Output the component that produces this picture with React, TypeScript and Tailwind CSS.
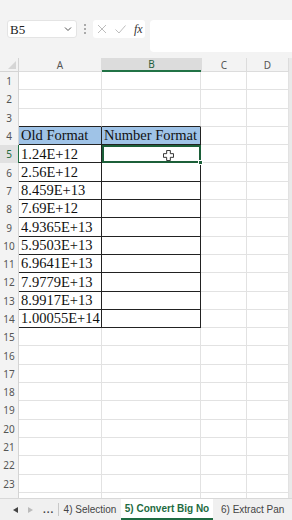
import React from "react";

const rows = Array.from({ length: 24 }, (_, i) => i + 1);

const data: Record<number, string> = {
  5: "1.24E+12",
  6: "2.56E+12",
  7: "8.459E+13",
  8: "7.69E+12",
  9: "4.9365E+13",
  10: "5.9503E+13",
  11: "6.9641E+13",
  12: "7.9779E+13",
  13: "8.9917E+13",
  14: "1.00055E+14",
};

const serif = { fontFamily: '"Liberation Serif", "Times New Roman", serif' };
const sans = { fontFamily: '"Noto Sans", "Open Sans", sans-serif' };
const tabFont = { fontFamily: '"Liberation Sans", Arial, sans-serif' };

function PlusCursor() {
  return (
    <svg width="11" height="11" viewBox="0 0 12 12" className="absolute left-[59px] top-[3px]">
      <path d="M4 0.5h4v3.5h3.5v4H8v3.5H4V8H0.5V4H4z" fill="#fff" stroke="#222" strokeWidth="1" />
    </svg>
  );
}

export default function App() {
  return (
    <div className="w-[292px] h-[520px] overflow-hidden bg-white flex flex-col" style={sans}>
      {/* formula bar */}
      <div className="h-[58px] shrink-0 bg-[#f3f3f3] flex items-start pt-[20px]">
        <div className="ml-[7px] w-[70px] h-[18px] bg-white rounded-[3px] border border-[#e4e4e4] flex items-center justify-between pl-[2px] pr-[4px]">
          <span className="text-[13px] text-[#222] leading-none" style={serif}>B5</span>
          <svg width="8" height="6" viewBox="0 0 8 6">
            <path d="M1 1.5l3 3 3-3" fill="none" stroke="#555" strokeWidth="1" />
          </svg>
        </div>
        <div className="w-[16px] h-[18px] flex flex-col items-center justify-center gap-[2px]">
          <span className="w-[2px] h-[2px] bg-[#aaa]" />
          <span className="w-[2px] h-[2px] bg-[#aaa]" />
          <span className="w-[2px] h-[2px] bg-[#aaa]" />
        </div>
        <div className="w-[52px] h-[18px] bg-white rounded-[3px] flex items-center pl-[4px] gap-[8px]">
          <svg width="10" height="10" viewBox="0 0 10 10">
            <path d="M1 1l8 8M9 1l-8 8" stroke="#bdbdbd" strokeWidth="1" />
          </svg>
          <svg width="11" height="9" viewBox="0 0 11 9">
            <path d="M0.5 4.5l3.5 3.5 6.5-7.5" fill="none" stroke="#bdbdbd" strokeWidth="1" />
          </svg>
          <span className="text-[12px] italic text-[#333] leading-none" style={serif}>fx</span>
        </div>
        <div className="ml-[5px] flex-1 h-[32px] bg-white rounded-l-[4px]" />
      </div>

      {/* column header */}
      <div className="h-[14px] shrink-0 flex bg-[#f3f3f3] text-[10px] text-[#555] leading-none">
        <div className="w-[19px] border-r border-b border-[#d4d4d4] relative">
          <svg width="8" height="8" viewBox="0 0 8 8" className="absolute right-[2px] bottom-[2px]">
            <path d="M8 0v8H0z" fill="#d6d6d6" />
          </svg>
        </div>
        <div className="w-[83px] border-r border-b border-[#dcdcdc] flex items-center justify-center">A</div>
        <div className="w-[99px] bg-[#dcdcdc] border-b-2 border-[#217346] flex items-center justify-center text-[#1f5e3a]">B</div>
        <div className="w-[46px] border-r border-b border-[#dcdcdc] border-l flex items-center justify-center">C</div>
        <div className="w-[42px] border-r border-b border-[#dcdcdc] flex items-center justify-center">D</div>
        <div className="flex-1 bg-[#e9e9e9]" />
      </div>

      {/* grid */}
      <div className="flex-1 overflow-hidden">
        {rows.map((r) => {
          const inTable = r >= 4 && r <= 14;
          const isHead = r === 4;
          const above = r === 3;
          return (
            <div key={r} className="h-[18.3px] flex">
              <div
                className={
                  r === 5
                    ? "w-[19px] bg-[#e1e1e1] border-r border-[#217346] flex items-center justify-center text-[10px] text-[#1f6b3e] leading-none"
                    : "w-[19px] bg-[#f3f3f3] border-r border-[#d4d4d4] flex items-center justify-center text-[10px] text-[#555] leading-none"
                }
              >
                {r}
              </div>
              <div
                className={
                  isHead
                    ? "w-[83px] bg-[#9fc3e7] border-r border-b border-[#222] flex items-center pl-[2px] text-[14.5px] text-[#111] leading-none"
                    : inTable
                    ? "w-[83px] border-r border-b border-[#222] flex items-center pl-[2px] text-[14.5px] text-[#111] leading-none"
                    : above
                    ? "w-[83px] border-r border-[#e2e2e2] border-b border-b-[#222]"
                    : "w-[83px] border-r border-b border-[#e2e2e2]"
                }
                style={inTable ? serif : undefined}
              >
                {isHead ? "Old Format" : data[r] ?? ""}
              </div>
              <div
                className={
                  isHead
                    ? "w-[99px] bg-[#9fc3e7] border-r border-b border-[#222] flex items-center pl-[2px] text-[14.5px] text-[#111] leading-none"
                    : r === 5
                    ? "w-[99px] border-2 border-[#1c5f39] relative"
                    : inTable
                    ? "w-[99px] border-r border-b border-[#222]"
                    : above
                    ? "w-[99px] border-r border-[#e2e2e2] border-b border-b-[#222]"
                    : "w-[99px] border-r border-b border-[#e2e2e2]"
                }
                style={isHead ? serif : undefined}
              >
                {isHead ? "Number Format" : null}
                {r === 5 ? (
                  <>
                    <PlusCursor />
                    <span className="absolute right-[-4px] bottom-[-4px] w-[5px] h-[5px] bg-[#1c5f39] border border-white" />
                  </>
                ) : null}
              </div>
              <div className="w-[46px] border-r border-b border-[#e2e2e2]" />
              <div className="w-[42px] border-r border-b border-[#e2e2e2]" />
              <div className="flex-1 bg-[#e9e9e9]" />
            </div>
          );
        })}
      </div>

      {/* sheet tabs */}
      <div
        className="h-[22px] shrink-0 bg-[#f0f0f0] border-t border-[#d8d8d8] flex items-stretch text-[10px] text-[#444] leading-none whitespace-nowrap"
        style={tabFont}
      >
        <div className="w-[58px] flex items-center pl-[13px] gap-[10px]">
          <svg width="5" height="6" viewBox="0 0 5 6">
            <path d="M5 0v6L0 3z" fill="#444" />
          </svg>
          <svg width="5" height="6" viewBox="0 0 5 6">
            <path d="M0 0v6l5-3z" fill="#bbb" />
          </svg>
          <span className="text-[#444] font-bold tracking-[1px]">...</span>
        </div>
        <div className="border-l border-[#c8c8c8] my-[4px]" />
        <div className="w-[62px] flex items-center justify-center">4) Selection</div>
        <div className="w-[92px] bg-white flex items-center justify-center font-bold text-[#1e6b41] border-b-2 border-[#1e6b41]">
          5) Convert Big No
        </div>
        <div className="flex-1 flex items-center pl-[8px]">6) Extract Pan</div>
      </div>
    </div>
  );
}
